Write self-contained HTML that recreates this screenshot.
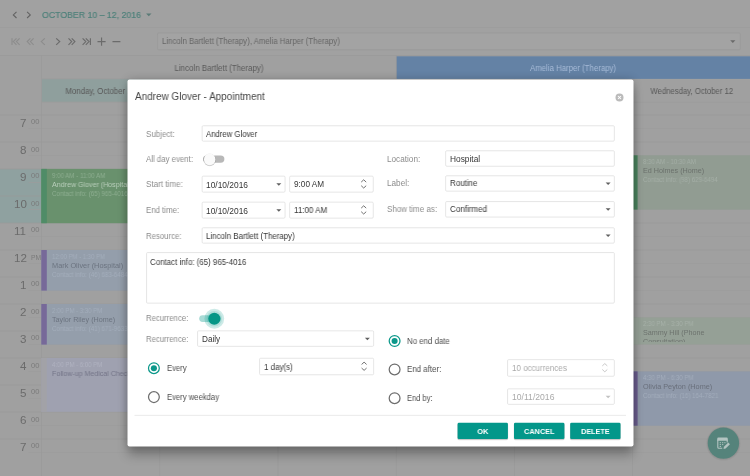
<!DOCTYPE html><html><head><meta charset="utf-8"><title>Scheduler</title><style>
*{box-sizing:border-box;margin:0;padding:0}
html,body{width:750px;height:476px;overflow:hidden;background:#a0a0a0;font-family:"Liberation Sans",sans-serif;}
#root{position:relative;width:750px;height:476px;overflow:hidden;background:#a0a0a0}
svg{position:absolute;left:0;top:0}
.t{position:absolute;white-space:nowrap;line-height:1;will-change:transform}
.w{position:absolute;line-height:1;overflow:hidden;will-change:transform}
#shadow{position:absolute;left:128px;top:80px;width:505px;height:366px;border-radius:2px;box-shadow:0 9px 11px rgba(0,0,0,.27),0 0 10px rgba(0,0,0,.24)}
</style></head><body><div id="root">
<svg width="750" height="476" viewBox="0 0 750 476"><rect x="0.00" y="0.00" width="750.00" height="55.50" fill="#a1a1a1" />
<rect x="0.00" y="27.00" width="750.00" height="0.70" fill="#9b9b9b" />
<rect x="0.00" y="55.20" width="750.00" height="0.70" fill="#999" />
<path d="M16.5 11.8L13.3 14.9L16.5 18M27.1 11.8L30.3 14.9L27.1 18" fill="none" stroke="#626262" stroke-width="1.08"/>
<path d="M146.1 13.5H151.5L148.8 16.2Z" fill="#5b7b77"/>
<path d="M12 38.3V44.9 M16.50 38.35L13.30 41.60L16.50 44.85 M19.60 38.35L16.40 41.60L19.60 44.85" fill="none" stroke="#8c8c8c" stroke-width="1.1"/>
<path d="M30.40 38.35L27.20 41.60L30.40 44.85 M33.60 38.35L30.40 41.60L33.60 44.85" fill="none" stroke="#8c8c8c" stroke-width="1.1"/>
<path d="M44.80 38.35L41.30 41.60L44.80 44.85" fill="none" stroke="#8c8c8c" stroke-width="1.1"/>
<path d="M56.20 38.35L59.70 41.60L56.20 44.85" fill="none" stroke="#6b6b6b" stroke-width="1.2"/>
<path d="M68.50 38.35L71.70 41.60L68.50 44.85 M71.70 38.35L74.90 41.60L71.70 44.85" fill="none" stroke="#6b6b6b" stroke-width="1.15"/>
<path d="M82.60 38.35L85.80 41.60L82.60 44.85 M85.80 38.35L89.00 41.60L85.80 44.85 M90.4 38.3V44.9" fill="none" stroke="#6b6b6b" stroke-width="1.15"/>
<path d="M97.5 41.6H105.6M101.55 37.5V45.7M112.5 41.6H120.4" fill="none" stroke="#6b6b6b" stroke-width="1.15"/>
<rect x="157.60" y="32.90" width="582.70" height="16.90" fill="#a3a3a3" stroke="#989898" stroke-width="0.7" rx="1.2"/>
<path d="M730.2 40.3H735.4L732.8 42.9Z" fill="#6a6a6a"/>
<rect x="396.20" y="56.30" width="353.80" height="22.60" fill="#6482a5" />
<rect x="41.50" y="78.60" width="354.70" height="0.70" fill="#9a9a9a" />
<rect x="41.70" y="79.20" width="117.90" height="22.70" fill="#8f9f9d" />
<rect x="41.50" y="101.80" width="708.50" height="0.70" fill="#9a9a9a" />
<rect x="0.00" y="169.00" width="159.60" height="54.00" fill="#8fa1a0" />
<rect x="0.00" y="114.65" width="750.00" height="0.70" fill="#9a9a9a" />
<rect x="28.70" y="128.15" width="721.30" height="0.70" fill="#9c9c9c" />
<rect x="0.00" y="141.65" width="750.00" height="0.70" fill="#9a9a9a" />
<rect x="28.70" y="155.15" width="721.30" height="0.70" fill="#9c9c9c" />
<rect x="0.00" y="168.65" width="750.00" height="0.70" fill="#9a9a9a" />
<rect x="28.70" y="182.15" width="721.30" height="0.70" fill="#9c9c9c" />
<rect x="0.00" y="195.65" width="750.00" height="0.70" fill="#9a9a9a" />
<rect x="28.70" y="209.15" width="721.30" height="0.70" fill="#9c9c9c" />
<rect x="0.00" y="222.65" width="750.00" height="0.70" fill="#9a9a9a" />
<rect x="28.70" y="236.15" width="721.30" height="0.70" fill="#9c9c9c" />
<rect x="0.00" y="249.65" width="750.00" height="0.70" fill="#9a9a9a" />
<rect x="28.70" y="263.15" width="721.30" height="0.70" fill="#9c9c9c" />
<rect x="0.00" y="276.65" width="750.00" height="0.70" fill="#9a9a9a" />
<rect x="28.70" y="290.15" width="721.30" height="0.70" fill="#9c9c9c" />
<rect x="0.00" y="303.65" width="750.00" height="0.70" fill="#9a9a9a" />
<rect x="28.70" y="317.15" width="721.30" height="0.70" fill="#9c9c9c" />
<rect x="0.00" y="330.65" width="750.00" height="0.70" fill="#9a9a9a" />
<rect x="28.70" y="344.15" width="721.30" height="0.70" fill="#9c9c9c" />
<rect x="0.00" y="357.65" width="750.00" height="0.70" fill="#9a9a9a" />
<rect x="28.70" y="371.15" width="721.30" height="0.70" fill="#9c9c9c" />
<rect x="0.00" y="384.65" width="750.00" height="0.70" fill="#9a9a9a" />
<rect x="28.70" y="398.15" width="721.30" height="0.70" fill="#9c9c9c" />
<rect x="0.00" y="411.65" width="750.00" height="0.70" fill="#9a9a9a" />
<rect x="28.70" y="425.15" width="721.30" height="0.70" fill="#9c9c9c" />
<rect x="0.00" y="438.65" width="750.00" height="0.70" fill="#9a9a9a" />
<rect x="28.70" y="452.15" width="721.30" height="0.70" fill="#9c9c9c" />
<rect x="41.25" y="55.50" width="0.75" height="420.50" fill="#9a9a9a" />
<rect x="159.45" y="79.00" width="0.75" height="397.00" fill="#9a9a9a" />
<rect x="277.65" y="79.00" width="0.75" height="397.00" fill="#9a9a9a" />
<rect x="395.85" y="55.50" width="0.75" height="420.50" fill="#9a9a9a" />
<rect x="514.05" y="79.00" width="0.75" height="397.00" fill="#9a9a9a" />
<rect x="632.25" y="79.00" width="0.75" height="397.00" fill="#9a9a9a" />
<rect x="41.30" y="168.90" width="116.20" height="54.30" fill="#69916d" />
<rect x="41.30" y="168.90" width="5.50" height="54.30" fill="#4f8c67" />
<rect x="41.30" y="250.00" width="116.20" height="40.60" fill="#949eab" />
<rect x="41.30" y="250.00" width="5.50" height="40.60" fill="#776999" />
<rect x="41.30" y="304.00" width="116.20" height="40.60" fill="#949eab" />
<rect x="41.30" y="304.00" width="5.50" height="40.60" fill="#776999" />
<rect x="41.30" y="358.00" width="116.20" height="53.80" fill="#9fa1b0" />
<rect x="41.30" y="358.00" width="5.50" height="53.80" fill="#a2a2a7" />
<rect x="632.30" y="155.30" width="117.70" height="54.30" fill="#919c92" />
<rect x="632.30" y="155.30" width="5.30" height="54.30" fill="#4c8660" />
<rect x="632.30" y="317.40" width="117.70" height="27.10" fill="#95a096" />
<rect x="632.30" y="317.40" width="5.30" height="27.10" fill="#9ba69c" />
<rect x="632.30" y="371.40" width="117.70" height="54.30" fill="#8f99aa" />
<rect x="632.30" y="371.40" width="5.30" height="54.30" fill="#6b5e90" />
<circle cx="723.4" cy="443.6" r="17.2" fill="#000" opacity=".035"/><circle cx="723.4" cy="443.4" r="16.4" fill="#000" opacity=".05"/>
<circle cx="723.4" cy="443.1" r="15.7" fill="#55837b"/>
<g transform="translate(714.8,435.2)" fill="none" stroke="#b3c4c1"><path d="M3.0 4.4v7.6q0 1 1 1h3.4M12.4 4.4v3" stroke-width="1.1"/><path d="M2.45 3.5q0-1.1 1.1-1.1h8.3q1.1 0 1.1 1.1v2.1H2.45z" fill="#b3c4c1" stroke="none"/><path d="M4.9 7.5h1.3M7.2 7.5h1.3M9.5 7.5h1.2M4.9 9.4h1.3M7.2 9.4h1.3M4.9 11.3h1.3" stroke-width="0.9"/><path d="M8.7 13.8l0.45-2.15 4.3-4.3 1.7 1.7-4.3 4.3z" fill="#b3c4c1" stroke="none"/></g></svg>
<div class="t" style="left:42.30px;top:10px;font-size:9.5px;color:#4d807a;transform:scaleX(0.920);transform-origin:0 50%;-webkit-text-stroke:0.2px #4d807a;">OCTOBER 10 – 12, 2016</div>
<div class="t" style="left:161.60px;top:38px;font-size:8.2px;color:#666;transform:scaleX(0.955);transform-origin:0 50%;">Lincoln Bartlett (Therapy), Amelia Harper (Therapy)</div>
<div class="t" style="left:172.57px;top:65px;font-size:8.2px;color:#595959;transform:scaleX(0.968);transform-origin:50% 50%;">Lincoln Bartlett (Therapy)</div>
<div class="t" style="left:528.49px;top:65px;font-size:8.2px;color:#a7bbd7;transform:scaleX(0.956);transform-origin:50% 50%;">Amelia Harper (Therapy)</div>
<div class="t" style="left:63.76px;top:88px;font-size:8.2px;color:#585858;transform:scaleX(0.961);transform-origin:50% 50%;">Monday, October 10</div>
<div class="t" style="left:647.67px;top:88px;font-size:8.2px;color:#585858;transform:scaleX(0.944);transform-origin:50% 50%;">Wednesday, October 12</div>
<div class="t" style="left:19.95px;top:117px;font-size:11.6px;color:#6b6b6b;">7</div>
<div class="t" style="left:30.80px;top:119px;font-size:6.4px;color:#7a7a7a;transform:scaleX(1.180);transform-origin:0 50%;">00</div>
<div class="t" style="left:19.95px;top:144px;font-size:11.6px;color:#6b6b6b;">8</div>
<div class="t" style="left:30.80px;top:147px;font-size:6.4px;color:#7a7a7a;transform:scaleX(1.180);transform-origin:0 50%;">00</div>
<div class="t" style="left:19.95px;top:171px;font-size:11.6px;color:#6b6b6b;">9</div>
<div class="t" style="left:30.80px;top:173px;font-size:6.4px;color:#7a7a7a;transform:scaleX(1.180);transform-origin:0 50%;">00</div>
<div class="t" style="left:13.50px;top:198px;font-size:11.6px;color:#6b6b6b;">10</div>
<div class="t" style="left:30.80px;top:201px;font-size:6.4px;color:#7a7a7a;transform:scaleX(1.180);transform-origin:0 50%;">00</div>
<div class="t" style="left:14.36px;top:225px;font-size:11.6px;color:#6b6b6b;">11</div>
<div class="t" style="left:30.80px;top:227px;font-size:6.4px;color:#7a7a7a;transform:scaleX(1.180);transform-origin:0 50%;">00</div>
<div class="t" style="left:13.50px;top:252px;font-size:11.6px;color:#6b6b6b;">12</div>
<div class="t" style="left:30.80px;top:255px;font-size:6.4px;color:#7a7a7a;transform:scaleX(1.052);transform-origin:0 50%;">PM</div>
<div class="t" style="left:19.95px;top:279px;font-size:11.6px;color:#6b6b6b;">1</div>
<div class="t" style="left:30.80px;top:281px;font-size:6.4px;color:#7a7a7a;transform:scaleX(1.180);transform-origin:0 50%;">00</div>
<div class="t" style="left:19.95px;top:306px;font-size:11.6px;color:#6b6b6b;">2</div>
<div class="t" style="left:30.80px;top:309px;font-size:6.4px;color:#7a7a7a;transform:scaleX(1.180);transform-origin:0 50%;">00</div>
<div class="t" style="left:19.95px;top:333px;font-size:11.6px;color:#6b6b6b;">3</div>
<div class="t" style="left:30.80px;top:335px;font-size:6.4px;color:#7a7a7a;transform:scaleX(1.180);transform-origin:0 50%;">00</div>
<div class="t" style="left:19.95px;top:360px;font-size:11.6px;color:#6b6b6b;">4</div>
<div class="t" style="left:30.80px;top:363px;font-size:6.4px;color:#7a7a7a;transform:scaleX(1.180);transform-origin:0 50%;">00</div>
<div class="t" style="left:19.95px;top:387px;font-size:11.6px;color:#6b6b6b;">5</div>
<div class="t" style="left:30.80px;top:389px;font-size:6.4px;color:#7a7a7a;transform:scaleX(1.180);transform-origin:0 50%;">00</div>
<div class="t" style="left:19.95px;top:414px;font-size:11.6px;color:#6b6b6b;">6</div>
<div class="t" style="left:30.80px;top:417px;font-size:6.4px;color:#7a7a7a;transform:scaleX(1.180);transform-origin:0 50%;">00</div>
<div class="t" style="left:19.95px;top:441px;font-size:11.6px;color:#6b6b6b;">7</div>
<div class="t" style="left:30.80px;top:443px;font-size:6.4px;color:#7a7a7a;transform:scaleX(1.180);transform-origin:0 50%;">00</div>
<div class="t" style="left:51.50px;top:173px;font-size:6.4px;color:#8eae91;transform:scaleX(0.958);transform-origin:0 50%;">9:00 AM - 11:00 AM</div>
<div class="t" style="left:51.50px;top:181px;font-size:7.2px;color:#b9cebb;transform:scaleX(0.986);transform-origin:0 50%;">Andrew Glover (Hospital)</div>
<div class="t" style="left:51.50px;top:191px;font-size:6.4px;color:#8eae91;transform:scaleX(0.973);transform-origin:0 50%;">Contact info: (65) 965-4016</div>
<div class="t" style="left:51.50px;top:254px;font-size:6.4px;color:#a4aebc;transform:scaleX(0.933);transform-origin:0 50%;">12:00 PM - 1:30 PM</div>
<div class="t" style="left:51.50px;top:262px;font-size:7.2px;color:#6c7480;transform:scaleX(1.024);transform-origin:0 50%;">Mark Oliver (Hospital)</div>
<div class="t" style="left:51.50px;top:272px;font-size:6.4px;color:#a4aebc;transform:scaleX(0.973);transform-origin:0 50%;">Contact info: (46) 683-6484</div>
<div class="t" style="left:51.50px;top:308px;font-size:6.4px;color:#a4aebc;transform:scaleX(0.943);transform-origin:0 50%;">2:00 PM - 3:30 PM</div>
<div class="t" style="left:51.50px;top:316px;font-size:7.2px;color:#6c7480;">Taylor Riley (Home)</div>
<div class="t" style="left:51.50px;top:326px;font-size:6.4px;color:#a4aebc;transform:scaleX(0.973);transform-origin:0 50%;">Contact info: (41) 671-9633</div>
<div class="t" style="left:51.50px;top:362px;font-size:6.4px;color:#b1b3c1;transform:scaleX(0.943);transform-origin:0 50%;">4:00 PM - 6:00 PM</div>
<div class="t" style="left:51.50px;top:370px;font-size:7.2px;color:#747588;transform:scaleX(0.980);transform-origin:0 50%;">Follow-up Medical Check</div>
<div class="t" style="left:642.50px;top:159px;font-size:6.4px;color:#a5afa7;transform:scaleX(0.943);transform-origin:0 50%;">8:30 AM - 10:30 AM</div>
<div class="t" style="left:642.50px;top:167px;font-size:7.2px;color:#6b716c;">Ed Holmes (Home)</div>
<div class="t" style="left:642.50px;top:177px;font-size:6.4px;color:#a5afa7;transform:scaleX(0.960);transform-origin:0 50%;">Contact info: (98) 629-6494</div>
<div class="t" style="left:642.50px;top:321px;font-size:6.4px;color:#a7b1a9;transform:scaleX(0.948);transform-origin:0 50%;">2:30 PM - 3:30 PM</div>
<div class="w" style="left:642.50px;top:329px;width:103.10px;height:13.60px;font-size:7.2px;line-height:9.2px;color:#6d736e;margin-top:-1px">Sammy Hill (Phone Consultation)</div>
<div class="t" style="left:642.50px;top:375px;font-size:6.4px;color:#a3adbc;transform:scaleX(0.948);transform-origin:0 50%;">4:30 PM - 6:30 PM</div>
<div class="t" style="left:642.50px;top:383px;font-size:7.2px;color:#696f7b;transform:scaleX(1.013);transform-origin:0 50%;">Olivia Peyton (Home)</div>
<div class="t" style="left:642.50px;top:393px;font-size:6.4px;color:#a3adbc;transform:scaleX(0.968);transform-origin:0 50%;">Contact info: (16) 164-7821</div>
<div id="shadow"></div>
<svg width="750" height="476" viewBox="0 0 750 476"><rect x="127.50" y="79.50" width="506.00" height="367.00" fill="#fff" rx="2"/>
<circle cx="619.5" cy="97.5" r="4" fill="#bbb"/><path d="M618 96L621 99M621 96L618 99" stroke="#fff" stroke-width="1.05"/>
<rect x="202.15" y="125.75" width="412.20" height="15.40" fill="#fff" stroke="#dbdbdb" stroke-width="0.7" rx="1.1"/>
<rect x="203.00" y="155.40" width="21.40" height="7.40" fill="#b8b8b8" rx="3.7"/>
<circle cx="209.7" cy="159.9" r="6.3" fill="#000" opacity=".10"/><circle cx="209.7" cy="160.1" r="6" fill="#000" opacity=".12"/><circle cx="209.7" cy="159.4" r="5.8" fill="#fafafa"/>
<rect x="445.65" y="150.75" width="168.70" height="15.50" fill="#fff" stroke="#dbdbdb" stroke-width="0.7" rx="1.1"/>
<rect x="202.15" y="176.15" width="82.90" height="16.00" fill="#fff" stroke="#dbdbdb" stroke-width="0.7" rx="1.1"/>
<path d="M276.30 183.20H281.30L278.80 185.70Z" fill="#606060"/>
<rect x="289.65" y="176.15" width="83.60" height="16.00" fill="#fff" stroke="#dbdbdb" stroke-width="0.7" rx="1.1"/>
<path d="M361.20 182.10L363.70 179.80L366.20 182.10M361.20 185.70L363.70 188.00L366.20 185.70" fill="none" stroke="#606060" stroke-width="0.9"/>
<rect x="445.65" y="175.75" width="168.70" height="15.40" fill="#fff" stroke="#dbdbdb" stroke-width="0.7" rx="1.1"/>
<path d="M605.60 182.50H610.60L608.10 185.00Z" fill="#606060"/>
<rect x="202.15" y="202.15" width="82.90" height="16.00" fill="#fff" stroke="#dbdbdb" stroke-width="0.7" rx="1.1"/>
<path d="M276.30 209.20H281.30L278.80 211.70Z" fill="#606060"/>
<rect x="289.65" y="202.15" width="83.60" height="16.00" fill="#fff" stroke="#dbdbdb" stroke-width="0.7" rx="1.1"/>
<path d="M361.20 208.10L363.70 205.80L366.20 208.10M361.20 211.70L363.70 214.00L366.20 211.70" fill="none" stroke="#606060" stroke-width="0.9"/>
<rect x="445.65" y="201.55" width="168.70" height="15.50" fill="#fff" stroke="#dbdbdb" stroke-width="0.7" rx="1.1"/>
<path d="M605.60 208.35H610.60L608.10 210.85Z" fill="#606060"/>
<rect x="202.15" y="227.75" width="412.20" height="15.40" fill="#fff" stroke="#dbdbdb" stroke-width="0.7" rx="1.1"/>
<path d="M605.60 234.50H610.60L608.10 237.00Z" fill="#606060"/>
<rect x="146.55" y="252.55" width="467.80" height="50.60" fill="#fff" stroke="#dbdbdb" stroke-width="0.7" rx="1.1"/>
<circle cx="214.3" cy="318.75" r="9.9" fill="#009688" opacity=".2"/><circle cx="214.3" cy="318.75" r="7.7" fill="#009688" opacity=".14"/>
<rect x="199.20" y="315.20" width="21.80" height="6.80" fill="#009688" rx="3.4" opacity=".34"/>
<circle cx="214.3" cy="318.75" r="6.05" fill="#059686"/>
<rect x="197.55" y="330.85" width="176.10" height="15.50" fill="#fff" stroke="#dbdbdb" stroke-width="0.7" rx="1.1"/>
<path d="M364.90 337.65H369.90L367.40 340.15Z" fill="#606060"/>
<circle cx="153.90" cy="368.20" r="5.4" fill="none" stroke="#0c988a" stroke-width="1.25"/><circle cx="153.90" cy="368.20" r="3.05" fill="#0c988a"/>
<rect x="259.55" y="358.25" width="114.10" height="16.50" fill="#fff" stroke="#dbdbdb" stroke-width="0.7" rx="1.1"/>
<path d="M361.60 364.45L364.10 362.15L366.60 364.45M361.60 368.05L364.10 370.35L366.60 368.05" fill="none" stroke="#606060" stroke-width="0.9"/>
<circle cx="153.90" cy="397.10" r="5.4" fill="none" stroke="#6e6e6e" stroke-width="1.25"/>
<circle cx="394.60" cy="341.00" r="5.4" fill="none" stroke="#0c988a" stroke-width="1.25"/><circle cx="394.60" cy="341.00" r="3.05" fill="#0c988a"/>
<circle cx="394.60" cy="369.40" r="5.4" fill="none" stroke="#6e6e6e" stroke-width="1.25"/>
<rect x="507.55" y="359.65" width="106.80" height="16.60" fill="#fff" stroke="#dbdbdb" stroke-width="0.7" rx="1.1"/>
<path d="M602.30 365.90L604.80 363.60L607.30 365.90M602.30 369.50L604.80 371.80L607.30 369.50" fill="none" stroke="#c2c2c2" stroke-width="0.9"/>
<circle cx="394.60" cy="398.20" r="5.4" fill="none" stroke="#6e6e6e" stroke-width="1.25"/>
<rect x="507.55" y="388.85" width="106.80" height="15.50" fill="#fff" stroke="#dbdbdb" stroke-width="0.7" rx="1.1"/>
<path d="M605.60 395.65H610.60L608.10 398.15Z" fill="#c2c2c2"/>
<rect x="134.50" y="414.90" width="491.50" height="0.70" fill="#e2e2e2" />
<rect x="457.60" y="423.60" width="50.30" height="16.70" fill="#000" rx="1.6" opacity=".13"/>
<rect x="457.30" y="423.10" width="50.90" height="16.70" fill="#000" rx="1.6" opacity=".12"/>
<rect x="457.60" y="422.70" width="50.30" height="16.40" fill="#03978a" rx="1.3"/>
<rect x="514.00" y="423.60" width="50.40" height="16.70" fill="#000" rx="1.6" opacity=".13"/>
<rect x="513.70" y="423.10" width="51.00" height="16.70" fill="#000" rx="1.6" opacity=".12"/>
<rect x="514.00" y="422.70" width="50.40" height="16.40" fill="#03978a" rx="1.3"/>
<rect x="570.20" y="423.60" width="50.30" height="16.70" fill="#000" rx="1.6" opacity=".13"/>
<rect x="569.90" y="423.10" width="50.90" height="16.70" fill="#000" rx="1.6" opacity=".12"/>
<rect x="570.20" y="422.70" width="50.30" height="16.40" fill="#03978a" rx="1.3"/></svg>
<div class="t" style="left:134.60px;top:92px;font-size:10.4px;color:#464646;transform:scaleX(0.957);transform-origin:0 50%;">Andrew Glover - Appointment</div>
<div class="t" style="left:145.60px;top:131px;font-size:8.2px;color:#8c8c8c;transform:scaleX(0.972);transform-origin:0 50%;">Subject:</div>
<div class="t" style="left:206.10px;top:131px;font-size:8.2px;color:#363636;transform:scaleX(0.946);transform-origin:0 50%;">Andrew Glover</div>
<div class="t" style="left:145.60px;top:156px;font-size:8.2px;color:#8c8c8c;transform:scaleX(0.956);transform-origin:0 50%;">All day event:</div>
<div class="t" style="left:386.60px;top:156px;font-size:8.2px;color:#8c8c8c;">Location:</div>
<div class="t" style="left:449.60px;top:156px;font-size:8.2px;color:#363636;transform:scaleX(1.019);transform-origin:0 50%;">Hospital</div>
<div class="t" style="left:145.60px;top:181px;font-size:8.2px;color:#8c8c8c;transform:scaleX(0.985);transform-origin:0 50%;">Start time:</div>
<div class="t" style="left:206.10px;top:182px;font-size:8.2px;color:#363636;transform:scaleX(1.025);transform-origin:0 50%;">10/10/2016</div>
<div class="t" style="left:293.60px;top:181px;font-size:8.2px;color:#363636;transform:scaleX(0.984);transform-origin:0 50%;">9:00 AM</div>
<div class="t" style="left:386.60px;top:180px;font-size:8.2px;color:#8c8c8c;transform:scaleX(0.989);transform-origin:0 50%;">Label:</div>
<div class="t" style="left:449.60px;top:180px;font-size:8.2px;color:#363636;transform:scaleX(0.969);transform-origin:0 50%;">Routine</div>
<div class="t" style="left:145.60px;top:207px;font-size:8.2px;color:#8c8c8c;transform:scaleX(0.958);transform-origin:0 50%;">End time:</div>
<div class="t" style="left:206.10px;top:208px;font-size:8.2px;color:#363636;transform:scaleX(1.025);transform-origin:0 50%;">10/10/2016</div>
<div class="t" style="left:293.60px;top:207px;font-size:8.2px;color:#363636;transform:scaleX(0.975);transform-origin:0 50%;">11:00 AM</div>
<div class="t" style="left:386.60px;top:206px;font-size:8.2px;color:#8c8c8c;transform:scaleX(0.973);transform-origin:0 50%;">Show time as:</div>
<div class="t" style="left:449.60px;top:206px;font-size:8.2px;color:#363636;transform:scaleX(0.981);transform-origin:0 50%;">Confirmed</div>
<div class="t" style="left:145.60px;top:233px;font-size:8.2px;color:#8c8c8c;transform:scaleX(0.951);transform-origin:0 50%;">Resource:</div>
<div class="t" style="left:206.10px;top:233px;font-size:8.2px;color:#363636;transform:scaleX(0.965);transform-origin:0 50%;">Lincoln Bartlett (Therapy)</div>
<div class="t" style="left:150.20px;top:259px;font-size:8.2px;color:#363636;transform:scaleX(0.967);transform-origin:0 50%;">Contact info: (65) 965-4016</div>
<div class="t" style="left:145.60px;top:315px;font-size:8.2px;color:#8c8c8c;transform:scaleX(0.949);transform-origin:0 50%;">Recurrence:</div>
<div class="t" style="left:145.60px;top:336px;font-size:8.2px;color:#8c8c8c;transform:scaleX(0.949);transform-origin:0 50%;">Recurrence:</div>
<div class="t" style="left:201.50px;top:336px;font-size:8.2px;color:#363636;transform:scaleX(0.993);transform-origin:0 50%;">Daily</div>
<div class="t" style="left:166.70px;top:365px;font-size:8.2px;color:#4e4e4e;transform:scaleX(0.940);transform-origin:0 50%;">Every</div>
<div class="t" style="left:263.50px;top:364px;font-size:8.2px;color:#363636;transform:scaleX(0.972);transform-origin:0 50%;">1 day(s)</div>
<div class="t" style="left:166.70px;top:394px;font-size:8.2px;color:#4e4e4e;transform:scaleX(0.937);transform-origin:0 50%;">Every weekday</div>
<div class="t" style="left:407.30px;top:338px;font-size:8.2px;color:#4e4e4e;transform:scaleX(0.960);transform-origin:0 50%;">No end date</div>
<div class="t" style="left:407.30px;top:366px;font-size:8.2px;color:#4e4e4e;transform:scaleX(0.965);transform-origin:0 50%;">End after:</div>
<div class="t" style="left:511.50px;top:365px;font-size:8.2px;color:#a9a9a9;transform:scaleX(0.977);transform-origin:0 50%;">10 occurrences</div>
<div class="t" style="left:407.30px;top:395px;font-size:8.2px;color:#4e4e4e;transform:scaleX(0.921);transform-origin:0 50%;">End by:</div>
<div class="t" style="left:511.50px;top:394px;font-size:8.2px;color:#a9a9a9;transform:scaleX(1.051);transform-origin:0 50%;">10/11/2016</div>
<div class="t" style="left:476.90px;top:428px;font-size:7.8px;color:#fff;transform:scaleX(0.949);transform-origin:50% 50%;font-weight:bold;">OK</div>
<div class="t" style="left:522.95px;top:428px;font-size:7.8px;color:#fff;transform:scaleX(0.942);transform-origin:50% 50%;font-weight:bold;">CANCEL</div>
<div class="t" style="left:579.97px;top:428px;font-size:7.8px;color:#fff;transform:scaleX(0.929);transform-origin:50% 50%;font-weight:bold;">DELETE</div>
</div></body></html>
